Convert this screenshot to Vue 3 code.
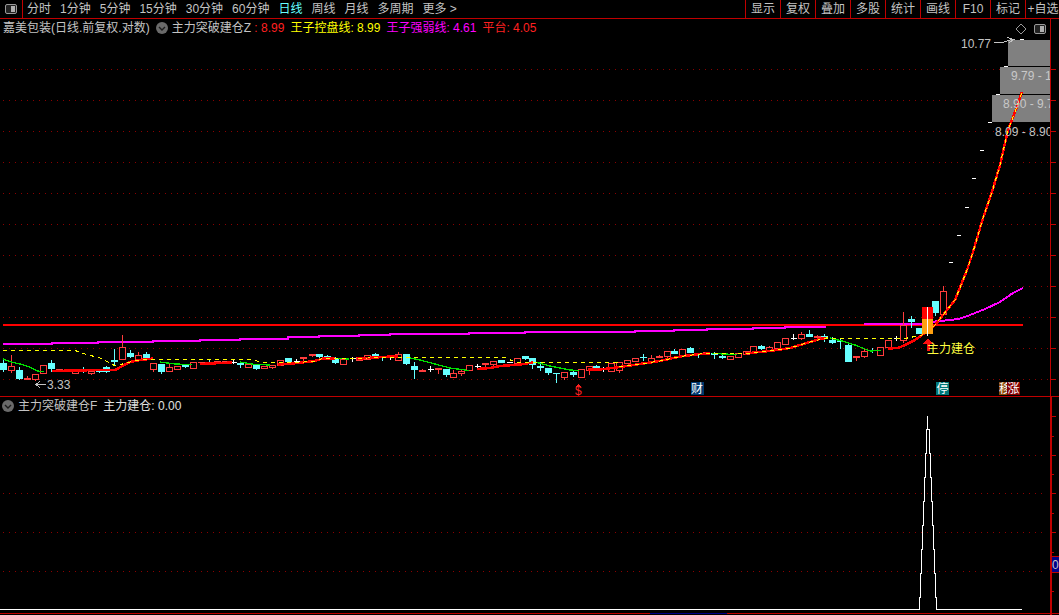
<script setup>
const navItems = ['分时','1分钟','5分钟','15分钟','30分钟','60分钟','日线','周线','月线','多周期','更多 >']
const tools = ['显示','复权','叠加','多股','统计','画线','F10','标记','+自选']

// [x, bodyTop, bodyBottom, wickTop, wickBottom, kind]  r hollow red, t solid red, c cyan, w white
const raw = [
[3,363,370,360,372,'c'],[11,366,370,355,373,'r'],[19,370,379,367,380,'c'],[27,378,380,376,380,'t'],[35,374,379,374,381,'r'],[43,365,373,365,373,'r'],[51,363,369,360,372,'c'],
[59,369,371,369,372,'t'],[67,370,371,369,372,'c'],[75,371,373,370,373,'r'],[83,370,371,367,373,'c'],[91,371,373,370,375,'r'],[99,370,372,369,373,'c'],[106,367,372,366,373,'c'],
[114,360,362,349,365,'c'],[122,347,359,335,359,'r'],[130,353,357,350,358,'c'],[138,355,359,352,362,'r'],[146,354,359,352,360,'c'],[153,363,369,363,372,'r'],[161,364,372,364,374,'c'],
[169,367,371,363,371,'r'],[177,366,369,366,369,'r'],[185,365,367,365,368,'c'],[193,362,368,362,368,'r'],[201,362,363,362,365,'t'],[209,362,363,360,363,'c'],[217,361,363,361,363,'r'],
[225,361,362,361,363,'t'],[233,362,363,360,364,'w'],[240,363,365,362,368,'c'],[248,364,367,364,367,'r'],[256,365,369,365,370,'c'],[264,366,368,366,368,'r'],[272,365,367,365,369,'r'],
[280,360,365,360,365,'r'],[288,358,362,358,364,'c'],[296,361,362,359,364,'w'],[303,357,359,357,363,'t'],[312,354,356,354,357,'t'],[319,354,357,354,358,'c'],[327,356,359,355,360,'c'],
[335,358,363,357,364,'c'],[343,359,364,359,364,'r'],[352,358,359,357,362,'w'],[359,357,360,357,361,'r'],[367,355,359,355,360,'r'],[375,354,356,353,358,'c'],[382,356,358,356,361,'c'],
[390,356,357,355,360,'w'],[398,354,360,352,361,'r'],[406,354,364,354,365,'c'],[414,366,370,362,379,'c'],[422,370,372,369,372,'t'],[430,369,370,366,372,'w'],[438,368,370,368,374,'t'],
[446,369,375,369,377,'c'],[453,373,377,370,377,'r'],[461,371,373,369,376,'r'],[469,365,370,365,370,'r'],[477,366,367,364,369,'w'],[485,363,365,363,369,'t'],[493,361,364,361,367,'r'],
[501,360,363,360,363,'c'],[509,362,363,362,363,'w'],[517,358,363,358,363,'r'],[525,356,359,356,360,'c'],[532,358,365,358,369,'c'],[540,366,368,362,371,'c'],[548,368,373,368,375,'c'],
[556,373,374,373,383,'c'],[564,372,377,372,380,'r'],[573,372,375,370,377,'c'],[581,369,377,369,377,'r'],[589,366,370,366,375,'r'],[596,366,369,365,369,'c'],[603,369,370,367,372,'w'],
[611,363,371,363,372,'r'],[619,362,370,362,373,'r'],[627,360,363,360,363,'r'],[635,358,361,358,361,'r'],[643,357,358,354,361,'c'],[651,358,361,355,361,'r'],[659,356,358,355,358,'t'],
[667,351,356,351,358,'r'],[674,351,354,349,354,'c'],[682,349,355,349,355,'r'],[690,348,353,347,353,'c'],[698,353,354,353,358,'c'],[706,352,354,352,354,'t'],[714,353,355,352,359,'c'],
[722,356,358,353,359,'c'],[730,356,359,356,359,'r'],[738,353,357,353,357,'r'],[746,351,354,351,354,'r'],[753,346,353,346,353,'r'],[761,346,349,345,350,'c'],[769,347,351,346,351,'r'],
[777,342,348,342,348,'r'],[785,338,344,338,344,'r'],[793,338,339,334,340,'w'],[801,334,338,332,340,'r'],[809,334,337,330,337,'c'],[817,336,338,335,338,'t'],[824,336,337,334,342,'c'],
[832,340,343,337,344,'c'],[840,341,342,339,349,'c'],[848,345,362,342,362,'c'],[856,356,358,356,361,'t'],[864,351,356,349,358,'r'],[872,350,351,348,353,'c'],[880,347,355,347,355,'r'],
[888,340,347,340,347,'r'],[896,338,339,336,341,'w'],[903,325,340,312,343,'r'],[911,319,322,316,328,'c'],[919,328,334,328,334,'c'],[935,301,313,301,316,'c'],[943,291,314,286,314,'r']
]
const colorOf = { r:'#ff3c3c', t:'#ff3c3c', c:'#66ffff', w:'#ffffff' }
const candles = raw.map(([x,a,b,c,d,k]) => ({
  x: x + 0.5, y: a, h: b - a, top: c, bottom: d,
  hollow: k === 'r', flat: k === 'w', color: colorOf[k]
}))

const pts = a => a.map(p => p.join(',')).join(' ')
const steps = a => {
  const out = []
  for (const [x0,x1,y] of a) { out.push([x0,y]); out.push([x1,y]) }
  return pts(out)
}

const magentaSteps = steps([[3,52,344],[52,98,343],[98,153,342],[153,200,341],[200,240,340],[240,288,339],[288,319,337],[319,359,336],[359,390,335],[390,469,334],[469,525,333],[525,635,332],[635,674,331],[674,707,330],[707,753,329],[753,785,328],[785,826,327]])
const magentaEnd = pts([[864,324],[920,324],[930,322],[945,320.5],[958,319],[965,317],[975,313],[985,309],[1000,302],[1013,293],[1023,288]])

const greens = [
  [[3,359],[11,362],[20,364],[30,367],[37,371],[44,371.5]],
  [[160,362],[175,364],[192,364.5]],
  [[240,362],[255,364.5],[270,365]],
  [[335,358.5],[349,359]],
  [[408,357.5],[420,360],[435,364],[450,368],[465,370],[469,370.5]],
  [[537,362.5],[550,366],[570,370],[579,370.5]],
  [[712,353.5],[737,354.5]],
  [[830,338],[842,341],[855,345],[870,351],[881,350.5]]
].map(pts)

const reds = [
  [[52,371],[100,370],[115,370],[130,362],[140,360],[153,358.5]],
  [[200,364],[232,362.5]],
  [[278,364.5],[298,363],[315,361],[322,358.7],[335,358.5]],
  [[357,358.7],[368,358],[385,356.8],[398,356.5]],
  [[477,369],[490,368],[500,366],[520,364.5],[533,362.5]],
  [[588,369.5],[600,369.5],[620,367],[640,364],[660,361],[680,356.5],[700,354],[710,353.5]],
  [[745,353.5],[770,351],[790,348],[810,342],[820,339],[826,338]],
  [[888,348.5],[898,348],[905,345],[915,340],[922,335],[935,325],[943,315],[955,300],[967,270],[973,252],[983,218],[992,192],[1000,165],[1008,130],[1015,112],[1022,92]]
].map(pts)

const yellow = pts([[3,350.5],[75,350.5],[85,354],[100,358],[112,364],[115,366],[130,362],[140,360],[153,359.5],[250,359.5],[262,362],[298,362.5],[315,361],[322,358.7],[368,358],[398,357],[410,357.5],[505,357.5],[515,362],[617,362.5],[620,367],[640,364],[660,361],[680,356.5],[700,354],[745,353.5],[770,351],[790,348],[810,342],[826,338],[905,338.5],[915,336.5],[922,335],[935,325],[943,315],[955,300],[967,270],[973,252],[983,218],[992,192],[1000,165],[1008,130],[1015,112],[1022,92]])

const mainGrid = [69,100,131,162,193,224,255,286,317,348,379]
const lowerGrid = [455,493,532,571]
const lowerMajor = [416,455,493,532,571]
const lowerMinor = [436,474,513,552,591]
const boxes = [
  { x: 1008, y: 40, w: 42, h: 26 },
  { x: 1000, y: 67, w: 50, h: 27 },
  { x: 992, y: 95, w: 58, h: 27 }
]
const dashes = [[1020,39],[1004,66],[996,94],[988,122],[980,150],[972,178],[965,207],[957,235],[949,262]]

const spike = (() => {
  const left = [[919.5,609.5],[919.5,597],[920.5,597],[920.5,573],[921.5,573],[921.5,549],[922.5,549],[922.5,525],[923.5,525],[923.5,501],[924.5,501],[924.5,477],[925.5,477],[925.5,453],[926.5,453],[926.5,429]]
  const leftOut = [[0,609.5],...left]
  const right = left.slice().reverse().map(([x,y]) => [1855.5 - x, y])
  return pts([...leftOut,[927.5,429],[927.5,416],[927.5,429],[928.5,429],...right,[1022,609.5]])
})()
</script>

<template>
  <div class="screen">
    <header class="toolbar">
      <div class="layout-cell">
        <span class="layout-icon"><i></i></span>
      </div>
      <nav class="nav">
        <span v-for="item in navItems" :key="item" class="nav-item" :class="{ active: item === '日线' }">{{ item }}</span>
      </nav>
      <div class="tools">
        <span v-for="t in tools" :key="t" class="tool">{{ t }}</span>
      </div>
    </header>

    <section class="pane main-pane">
      <svg class="canvas" viewBox="0 19 1059 377" width="1059" height="377">
        <defs>
          <clipPath id="chip-clip"><rect x="0" y="19" width="1050" height="377" /></clipPath>
        </defs>
        <line v-for="y in mainGrid" :key="y" x1="3" x2="1050" :y1="y + .5" :y2="y + .5" class="grid" />
        <rect x="1050" y="19" width="1" height="377" fill="#c00000" />
        <rect v-for="y in mainGrid" :key="'t'+y" x="1051" :y="y" width="5" height="1" fill="#c00000" />

        <rect v-for="(b, i) in boxes" :key="i" :x="b.x" :y="b.y" :width="b.w" :height="b.h" fill="#808080" />
        <rect v-for="d in dashes" :key="d[0]" :x="d[0]" :y="d[1]" width="4" height="1" fill="#ffffff" />

        <rect x="3" y="324" width="1020" height="2" fill="#ff0000" />
        <polyline :points="magentaSteps" class="line magenta" />
        <polyline :points="magentaEnd" class="line magenta" />

        <g v-for="(c, i) in candles" :key="i">
          <line :x1="c.x" :x2="c.x" :y1="c.top" :y2="c.bottom" :stroke="c.color" />
          <line v-if="c.flat" :x1="c.x - 3" :x2="c.x + 3" :y1="c.y + .5" :y2="c.y + .5" :stroke="c.color" />
          <rect v-else-if="c.hollow" :x="c.x - 3" :y="c.y + .5" width="6" :height="c.h" fill="#000" :stroke="c.color" />
          <rect v-else :x="c.x - 3.5" :y="c.y" width="7" :height="c.h" :fill="c.color" />
        </g>

        <polyline v-for="(p, i) in greens" :key="'g'+i" :points="p" class="line green" />
        <polyline v-for="(p, i) in reds" :key="'r'+i" :points="p" class="line red" />
        <polyline :points="yellow" class="line yellow" />

        <rect x="922" y="307" width="11" height="12" fill="#ff0000" />
        <rect x="922" y="319" width="11" height="15" fill="#ffa010" />
        <line x1="927.5" x2="927.5" y1="307" y2="336" stroke="#ffffff" />

        <g clip-path="url(#chip-clip)">
          <text x="1011" y="80" class="label muted">9.79 - 10.77</text>
          <text x="1003" y="108" class="label muted">8.90 - 9.79</text>
          <text x="995" y="136" class="label">8.09 - 8.90</text>
        </g>
        <text x="961" y="48" class="label">10.77</text>
        <path d="M994 42.5H1002L1012 39.5M1007 37.5L1014 39.5L1009 42.5" class="arrow" />

        <text x="47" y="389" class="label">3.33</text>
        <path d="M46 384.5H36M40 381L36 384.5L40 388" class="arrow" />

        <path d="M928 338L933 344H929.5V351H926.5V344H923Z" fill="#ff1010" />
        <text x="927" y="353" class="label gold">主力建仓</text>

        <path d="M578.5 384L581 387H576Z" fill="#ff2020" />
        <text x="575" y="395" class="sign">$</text>

        <rect x="691" y="382" width="13" height="13" fill="#00386e" />
        <text x="691" y="393" class="chip">财</text>
        <rect x="936" y="382" width="13" height="13" fill="#007878" />
        <text x="936.5" y="393" class="chip">停</text>
        <rect x="999" y="382" width="9" height="13" fill="#8a4a08" />
        <text x="999" y="393" class="chip">移</text>
        <rect x="1007" y="382" width="13" height="13" fill="#840000" />
        <text x="1007.5" y="393" class="chip">涨</text>
      </svg>

      <div class="legend">
        <span class="stock">嘉美包装(日线.前复权.对数)</span>
        <span class="badge"><svg viewBox="0 0 12 12" width="12" height="12"><circle cx="6" cy="6" r="6" fill="#6a6a6a" /><path d="M3 5L6 8L9 5" fill="none" stroke="#1c1c1c" stroke-width="1.4" /></svg></span>
        <span class="ind">主力突破建仓Z</span>
        <span class="val red-t">&nbsp;: 8.99</span>
        <span class="val yellow-t gap">王子控盘线: 8.99</span>
        <span class="val magenta-t gap">王子强弱线: 4.61</span>
        <span class="val red-t gap">平台: 4.05</span>
      </div>

      <div class="corner">
        <svg viewBox="0 0 12 12" width="12" height="12"><path d="M6 1L11 6L6 11L1 6Z" fill="none" stroke="#9a9a9a" /></svg>
        <span class="layout-icon"><i></i></span>
      </div>
    </section>

    <section class="pane lower-pane">
      <svg class="canvas" viewBox="0 397 1059 218" width="1059" height="218">
        <line v-for="y in lowerGrid" :key="y" x1="3" x2="1046" :y1="y + .5" :y2="y + .5" class="grid" />
        <rect x="1050" y="397" width="2" height="218" fill="#c00000" />
        <rect v-for="y in lowerMajor" :key="'M'+y" x="1052" :y="y" width="4" height="1" fill="#c00000" />
        <rect v-for="y in lowerMinor" :key="'m'+y" x="1052" :y="y" width="2" height="1" fill="#c00000" />
        <rect x="1052" y="556" width="7" height="16" fill="#000088" />
        <rect x="1052" y="556" width="7" height="1" fill="#c00000" />
        <rect x="1052" y="572" width="7" height="1" fill="#c00000" />
        <text x="1052" y="569" class="label">0</text>
        <polyline :points="spike" class="line spike" />
        <rect x="0" y="613" width="1059" height="1" fill="#c00000" />
        <rect x="650" y="613" width="77" height="1" fill="#000088" />
      </svg>
      <div class="legend lower-legend">
        <span class="badge"><svg viewBox="0 0 12 12" width="12" height="12"><circle cx="6" cy="6" r="6" fill="#6a6a6a" /><path d="M3 5L6 8L9 5" fill="none" stroke="#1c1c1c" stroke-width="1.4" /></svg></span>
        <span class="ind">主力突破建仓F</span>
        <span class="val white-t">主力建仓: 0.00</span>
      </div>
    </section>
  </div>
</template>

<style scoped>
.screen {
  width: 1059px;
  height: 615px;
  overflow: hidden;
  display: flex;
  flex-direction: column;
  background: #000;
  color: #c4c4c4;
  font: 12px/18px "Liberation Sans", "Noto Sans CJK SC", sans-serif;
}
.toolbar {
  flex: none;
  height: 18px;
  display: flex;
  border-bottom: 1px solid #c00000;
}
.layout-cell {
  flex: none;
  width: 22px;
  display: flex;
  align-items: center;
  justify-content: center;
  border-right: 1px solid #c00000;
}
.layout-icon {
  display: block;
  width: 12px;
  height: 10px;
  padding: 1px;
  box-sizing: border-box;
  border: 1px solid #9a9a9a;
  border-radius: 2px;
  background: #222;
}
.layout-icon i {
  display: block;
  width: 4px;
  height: 100%;
  margin-left: auto;
  background: #b0b0b0;
}
.nav {
  flex: 1;
  display: flex;
  gap: 9px;
  padding-left: 4px;
  white-space: nowrap;
}
.nav-item.active { color: #66ffff; }
.tools {
  flex: none;
  display: flex;
  width: 314px;
}
.tool {
  flex: none;
  width: 35px;
  box-sizing: border-box;
  border-left: 1px solid #c00000;
  text-align: center;
  white-space: nowrap;
}
.pane {
  position: relative;
  flex: none;
}
.main-pane {
  height: 377px;
  border-bottom: 1px solid #c00000;
}
.lower-pane { height: 218px; }
.canvas {
  position: absolute;
  inset: 0;
  display: block;
  shape-rendering: crispEdges;
}
.legend {
  position: relative;
  display: flex;
  align-items: center;
  padding: 0 0 0 3px;
  white-space: nowrap;
}
.lower-legend { padding-left: 2px; }
.lower-legend .val { margin-left: 6px; }
.badge {
  flex: none;
  display: flex;
  margin: 0 4px 0 0;
}
.main-pane .badge { margin: 0 4px 0 6px; }
.gap { margin-left: 6px; }
.red-t { color: #ff2020; }
.yellow-t { color: #ffff00; }
.magenta-t { color: #ff00ff; }
.white-t { color: #e0e0e0; }
.corner {
  position: absolute;
  top: 4px;
  right: 13px;
  display: flex;
  align-items: center;
  gap: 7px;
}
.grid {
  stroke: #8c0000;
  stroke-dasharray: 1 5;
}
.line { fill: none; }
.magenta { stroke: #ff00ff; stroke-width: 2; }
.green { stroke: #00e000; stroke-width: 1.3; }
.red { stroke: #ff0000; stroke-width: 2.5; }
.yellow { stroke: #ffff00; stroke-width: 1; stroke-dasharray: 4 4; }
.spike { stroke: #ffffff; stroke-width: 1; }
.label {
  font: 12px "Liberation Sans", "Noto Sans CJK SC", sans-serif;
  fill: #c4c4c4;
}
.muted { fill: #c8c8c8; }
.gold { fill: #ffff40; }
.sign {
  font: 12px "Liberation Sans", sans-serif;
  fill: #ff2020;
}
.chip {
  font: 12px "Noto Sans CJK SC", sans-serif;
  fill: #ffffff;
}
.arrow {
  fill: none;
  stroke: #c4c4c4;
}
</style>
